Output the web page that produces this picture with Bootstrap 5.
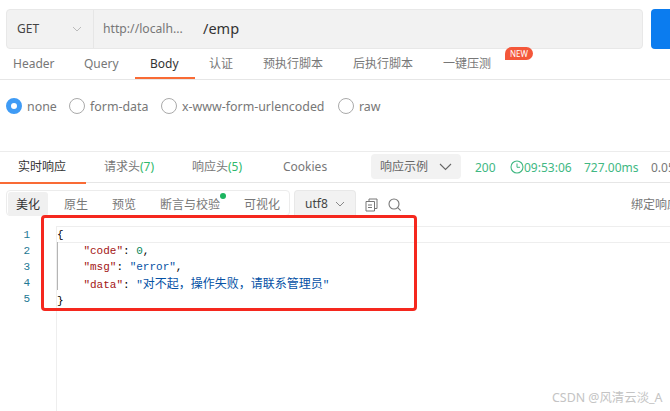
<!DOCTYPE html>
<html lang="zh"><head><meta charset="utf-8">
<link rel="stylesheet" href="https://cdn.jsdelivr.net/npm/bootstrap@5.3.0/dist/css/bootstrap.min.css">
<style>
html,body{width:670px;height:411px;overflow:hidden;background:#fff}
body{font-family:"Noto Sans","Noto Sans CJK SC",sans-serif;font-size:12px;color:#555;position:relative}
.page-wrap{width:670px;height:411px;overflow:hidden;padding-top:9px}
.url-row{height:40px;padding-left:6px;gap:8px}
.url-box{width:637px;background:#f2f2f2;border:1px solid #e8e8e8;border-radius:4px;flex:none}
.method{width:87px;padding-left:10px;padding-right:11px;border-right:1px solid #e6e6e6;color:#444;font-size:12px}
.host{color:#777;font-size:12.2px;padding-left:9px;width:109px;flex:none}
.path{color:#333;font-size:14.5px}
.send-btn{width:30px;height:40px;flex:none;background:#0b7cef;border-radius:4px 0 0 4px}
.req-tabs{height:31px;border-bottom:1px solid #e6e6e6;padding-left:13px;font-size:12px;color:#777;position:relative}
.req-tab{height:30px;line-height:30px;flex:none;white-space:nowrap}
.req-tab.on{color:#333;position:relative}
.req-tab.on::after{content:"";position:absolute;left:-15px;right:-15px;bottom:0;height:2px;background:#f96b35}
.new-tag{position:absolute;left:505px;top:-2px;width:28px;height:13px;border-radius:7px 7px 7px 0;background:#f4573a;color:#fff;font-size:8px;line-height:13px;text-align:center;font-family:"Noto Sans",sans-serif}
.body-types{height:71px;padding:16px 0 0 6px;align-items:flex-start;font-size:12.4px;color:#777}
.rad{display:flex;align-items:center;height:20px;gap:5px;white-space:nowrap}
.rad i{width:16px;height:16px;border:1px solid #aaa;border-radius:50%;display:block;flex:none}
.rad i.sel{border:5px solid #3f9bf5}
.rad span{padding-top:3px}
.res-tabs{height:32px;border-top:1px solid #ececec;border-bottom:1px solid #e6e6e6;position:relative;white-space:nowrap;color:#777;font-size:12px}
.res-tab{position:absolute;top:5px;line-height:20px}
.res-tab.on{color:#333}
.res-tab.on::after{content:"";position:absolute;left:-18px;width:86px;top:25px;height:2px;background:#f96b35}
.gr{color:#2fb96b}
.eg-select{position:absolute;left:371px;top:2px;width:90px;height:25px;background:#f2f2f2;border-radius:4px;padding:0 9px;color:#666}
.stat{position:absolute;top:6px;line-height:19px;color:#41b883;font-size:12px}
.tool-row{height:27px;margin-top:7px;padding-left:6px;position:relative}
.seg{width:284px;height:26px;border:1px solid #ececec;border-radius:4px;padding:1px;position:relative;color:#777;font-size:12px}
.seg span{position:absolute;top:3px;line-height:22px;white-space:nowrap}
.seg span.on{left:1px;top:1px;width:40px;height:24px;line-height:26px;background:#f0f0f0;border-radius:3px;color:#333;text-align:center}
.dot{position:absolute;left:213px;top:2px;width:6px;height:6px;border-radius:50%;background:#1cb45f}
.enc{width:62px;height:26px;margin-left:4px;background:#f2f2f2;border:1px solid #e8e8e8;border-bottom:0;border-radius:4px 4px 0 0;padding:0 10px 0 10px;color:#444;font-size:12px}
.tool-ic{position:absolute;top:8px}
.bind{position:absolute;left:631px;top:6px;white-space:nowrap;color:#777;font-size:12px}
.code-area{margin-top:9px;position:relative;height:190px;font-family:"Liberation Mono","Noto Sans CJK SC",monospace;font-size:11px;line-height:16px}
.gutter{width:57px;flex:none;border-right:1px solid #eee;height:190px;text-align:right;padding:1px 26px 0 0;color:#237893}
.cur{position:absolute;left:57px;right:0;top:0;height:17px;border-top:1px solid #eee;border-bottom:1px solid #eee}
.lines{position:relative;padding-top:1px;color:#000;white-space:pre}
.guide{position:absolute;left:0;top:16px;height:48px;border-left:1px solid #b5b5b5}
.k{color:#a31515}.n{color:#098658}.s{color:#0451a5}
.cjk{font-size:12px;font-family:"Noto Sans CJK SC",sans-serif}
.red-box{position:absolute;left:41px;top:215px;width:376px;height:96px;border:3px solid #f5281e;border-radius:4px}
.mark-text{position:absolute;left:552px;top:390px;font-size:12.4px;color:#c4c4c4;white-space:nowrap;line-height:16px}
</style></head><body>
<div class="page-wrap">
 <div class="url-row d-flex">
  <div class="url-box d-flex align-items-center">
   <div class="method h-100 d-flex align-items-center justify-content-between"><span>GET</span>
    <svg width="10" height="6" viewBox="0 0 10 6"><path d="M1 1l4 4 4-4" fill="none" stroke="#bbb"/></svg></div>
   <div class="host">http://localh...</div>
   <div class="path">/emp</div>
  </div>
  <div class="send-btn"></div>
 </div>
 <div class="req-tabs d-flex">
  <div class="req-tab" style="width:71px">Header</div>
  <div class="req-tab" style="width:66px">Query</div>
  <div class="req-tab on" style="width:30px">Body</div>
  <div class="req-tab" style="margin-left:29px;width:54px">认证</div>
  <div class="req-tab" style="width:90px">预执行脚本</div>
  <div class="req-tab" style="width:90px">后执行脚本</div>
  <div class="req-tab">一键压测</div>
  <div class="new-tag">NEW</div>
 </div>
 <div class="body-types d-flex">
  <div class="rad" style="width:63px"><i class="sel"></i><span>none</span></div>
  <div class="rad" style="width:92px"><i></i><span>form-data</span></div>
  <div class="rad" style="width:177px"><i></i><span>x-www-form-urlencoded</span></div>
  <div class="rad"><i></i><span>raw</span></div>
 </div>
 <div class="res-tabs">
  <span class="res-tab on" style="left:18px">实时响应</span>
  <span class="res-tab" style="left:104px">请求头<span class="gr">(7)</span></span>
  <span class="res-tab" style="left:192px">响应头<span class="gr">(5)</span></span>
  <span class="res-tab" style="left:283px">Cookies</span>
  <div class="eg-select d-flex align-items-center justify-content-between"><span>响应示例</span>
   <svg width="13" height="8" viewBox="0 0 13 8"><path d="M1 1l5.500 5.500L12 1" fill="none" stroke="#666" stroke-width="1.100"/></svg></div>
  <span class="stat" style="left:475px">200</span>
  <svg class="stat" style="left:510px;top:8px" width="14" height="14" viewBox="0 0 14 14"><circle cx="7" cy="7" r="6" fill="none" stroke="#41b883" stroke-width="1.100"/><path d="M7 3.500V7.300H10" fill="none" stroke="#41b883"/></svg>
  <span class="stat" style="left:524px">09:53:06</span>
  <span class="stat" style="left:584px">727.00ms</span>
  <span class="stat" style="left:651px;color:#777">0.05</span>
 </div>
 <div class="tool-row d-flex">
  <div class="seg">
   <span class="on">美化</span>
   <span style="left:57px">原生</span>
   <span style="left:105px">预览</span>
   <span style="left:153px">断言与校验</span>
   <i class="dot"></i>
   <span style="left:237px">可视化</span>
  </div>
  <div class="enc d-flex align-items-center justify-content-between"><span>utf8</span>
   <svg width="10" height="6" viewBox="0 0 10 6"><path d="M1 1l4 4 4-4" fill="none" stroke="#888"/></svg></div>
  <svg class="tool-ic" style="left:365px" width="13" height="14" viewBox="0 0 13 14"><path d="M4 3V1h8v9.500h-2M1 3.500h8.500V13H1zM3 7h4M3 9.500h4" fill="none" stroke="#777"/></svg>
  <svg class="tool-ic" style="left:388px" width="14" height="14" viewBox="0 0 14 14"><circle cx="6" cy="6" r="5" fill="none" stroke="#777" stroke-width="1.100"/><path d="M9.700 9.700l3 3" stroke="#777" stroke-width="1.100"/></svg>
  <span class="bind">绑定响应</span>
 </div>
 <div class="code-area d-flex">
  <div class="gutter">1<br>2<br>3<br>4<br>5</div>
  <div class="cur"></div>
  <div class="lines"><div class="guide"></div><div>{</div><div>    <span class="k">"code"</span>: <span class="n">0</span>,</div><div>    <span class="k">"msg"</span>: <span class="s">"error"</span>,</div><div>    <span class="k">"data"</span>: <span class="s">"<span class="cjk">对不起，操作失败，请联系管理员</span>"</span></div><div>}</div></div>
 </div>
</div>
<div class="red-box"></div>
<div class="mark-text">CSDN @风清云淡_A</div>
</body></html>
